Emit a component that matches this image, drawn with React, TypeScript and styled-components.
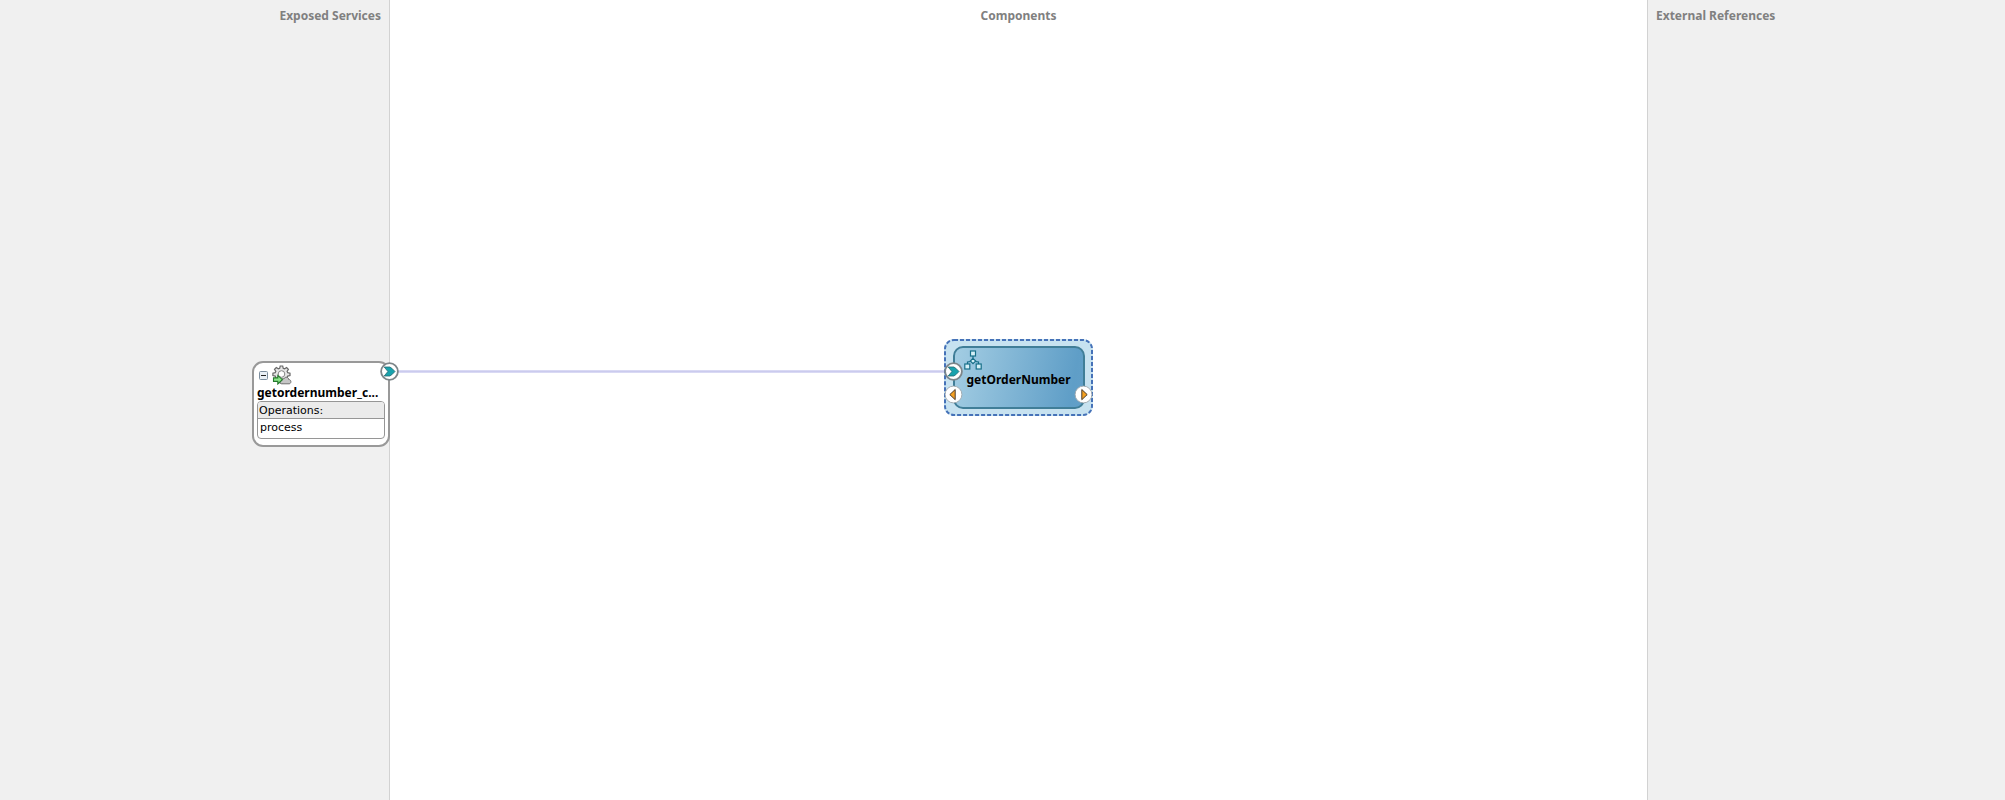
import React from "react";
import styled, { createGlobalStyle } from "styled-components";

const GlobalStyle = createGlobalStyle`
  *, *::before, *::after { box-sizing: border-box; }
  body {
    margin: 0;
    background: #ffffff;
    color: #000000;
    font-family: "Noto Sans", "Open Sans", sans-serif;
  }
`;

const Composite = styled.main`
  display: grid;
  grid-template-columns: 390fr 1257fr 358fr;
  min-height: 100vh;
`;

const Lane = styled.section<{ $side?: "left" | "right" }>`
  position: relative;
  padding: 6px 8px;
  background: ${({ $side }) => ($side ? "#f0f0f0" : "#ffffff")};
  text-align: center;
  ${({ $side }) => $side === "left" && "border-right: 1px solid #d2d2d2; text-align: right; z-index: 1;"}
  ${({ $side }) => $side === "right" && "border-left: 1px solid #d2d2d2; text-align: left;"}
`;

const LaneTitle = styled.h2`
  margin: 0;
  color: #808080;
  font-size: 12px;
  line-height: 19px;
  font-weight: 700;
`;

const Wire = styled.div`
  position: absolute;
  top: 370px;
  left: 0;
  right: 50%;
  height: 3px;
  background: linear-gradient(#e0e0f6, #cbcbee, #e0e0f6);
`;

const ServiceNode = styled.article`
  position: absolute;
  top: 361px;
  right: -1px;
  width: 138px;
  padding: 2px 3px 6px;
  border: 2px solid #999999;
  border-radius: 11px;
  background: #ffffff;
  text-align: left;
`;

const ServiceIcons = styled.div`
  display: flex;
  align-items: center;
  gap: 4px;
  height: 20px;
  padding-left: 2px;
`;

const Toggle = styled.button`
  display: flex;
  padding: 0;
  border: 0;
  background: none;
`;

const ServiceName = styled.h3`
  margin: 0;
  font-size: 12px;
  line-height: 16px;
  font-weight: 700;
  white-space: nowrap;
`;

const Operations = styled.table`
  width: 100%;
  border: 1px solid #969696;
  border-radius: 4px;
  border-spacing: 0;
  overflow: hidden;
  font-family: "DejaVu Sans", sans-serif;
  font-size: 11px;
  line-height: 15px;
`;

const OperationsHead = styled.th`
  padding: 1px 1px 0;
  border-bottom: 1px solid #969696;
  background: #ebebeb;
  font-weight: 400;
  text-align: left;
`;

const Operation = styled.td`
  padding: 1px 2px 3px;
`;

const ComponentNode = styled.article`
  position: absolute;
  top: 339px;
  left: 50%;
  width: 149px;
  height: 77px;
  margin-left: -75px;
  padding: 7px 8px 7px 9px;
  border-radius: 10px;
  background: #c7e2f0;
`;

const SelectionOutline = styled.svg`
  position: absolute;
  inset: 0;
`;

const ComponentBody = styled.div`
  display: flex;
  flex-direction: column;
  height: 100%;
  padding: 2px 9px;
  border: 2px solid #407e98;
  border-radius: 10px;
  background: linear-gradient(100deg, #a3cde3 0%, #5f9ec7 90%, #629fc8 100%);
`;

const ComponentName = styled.h3`
  margin: 0;
  font-size: 12px;
  line-height: 19px;
  font-weight: 700;
  text-align: center;
  white-space: nowrap;
`;

const Port = styled.span<{ $edge: "left" | "right"; $top: number; $out: number }>`
  position: absolute;
  top: ${({ $top }) => $top}px;
  ${({ $edge, $out }) => `${$edge}: ${$out}px;`}
  display: flex;
`;

const PortIcon = ({ kind }: { kind: "service" | "back" | "forward" }) => (
  <svg width="19" height="19" viewBox="0 0 19 19" aria-hidden="true">
    <circle
      cx="9.5"
      cy="9.5"
      r="8.4"
      fill="#fff"
      stroke={kind === "service" ? "#7d8589" : "#9da6ab"}
      strokeWidth={kind === "service" ? 1.8 : 0.9}
    />
    {kind === "service" && (
      <path
        d="M4.2 5h5.600Q11.200 5.300 15 9.500 11.200 13.700 9.800 14H4.200L7.900 9.500z"
        fill="#18a2ad"
        stroke="#246a72"
        strokeWidth="0.8"
      />
    )}
    {kind === "back" && (
      <path d="M11.2 4.5v10.2L5.8 9.6z" fill="#f5a020" stroke="#493c30" strokeWidth="1" />
    )}
    {kind === "forward" && (
      <path d="M7.8 4.5v10.2l5.4-5.1z" fill="#f5a020" stroke="#493c30" strokeWidth="1" />
    )}
  </svg>
);

const CollapseIcon = () => (
  <svg width="9" height="9" viewBox="0 0 9 9" aria-hidden="true">
    <rect x="0.5" y="0.5" width="8" height="8" rx="1" fill="#e9eff5" stroke="#7c8e9f" />
    <path d="M2 4.5h5" stroke="#222" />
  </svg>
);

const GearIcon = () => (
  <svg width="20" height="20" viewBox="0 0 20 20" aria-hidden="true">
    <path
      d="M8.2 1h2.5l.5 2.2 1.4.6 2-1.3 1.8 1.8-1.3 2 .6 1.4 2.3.5v2.4l-2.3.5-.6 1.4 1.2 1.9-1.8 1.8-2-1.3-1.4.6-.5 2.3H8.2l-.5-2.3-1.4-.6-2 1.3-1.8-1.8 1.3-1.9-.6-1.4L.9 10.6V8.2l2.3-.5.6-1.4-1.3-2 1.8-1.8 2 1.3 1.4-.6z"
      fill="#e6e6e6"
      stroke="#686868"
      strokeWidth="1.2"
    />
    <circle cx="9.5" cy="9" r="3.3" fill="#fff" stroke="#858585" />
    <path
      d="M9.5 18.8c-1.8-.2-2.1-2.5-.3-3-.2-1.7 1.5-2.7 2.7-1.9 1-2.5 4.6-2 4.9.6 2.6.1 2.8 3.9.5 4.3z"
      fill="#c6c6c6"
      stroke="#707070"
    />
    <path d="M1.5 12.9h4.3v-2.5l4.6 4.3-4.6 4.3v-2.6H1.5z" fill="#8ce68a" stroke="#26792d" strokeWidth="1.1" />
  </svg>
);

const MediatorIcon = () => (
  <svg width="18" height="20" viewBox="0 0 18 20" aria-hidden="true">
    <g fill="#d5f0f7" stroke="#176f89" strokeWidth="1.2">
      <path d="M9 6v3M6.5 11.5L3.5 12v2M11.5 11.5l3 .5v2" fill="none" />
      <rect x="6.5" y="1" width="5" height="5" />
      <path d="M9 8.3l2.7 2.7L9 13.7 6.3 11z" />
      <rect x="0.8" y="14" width="5" height="5" />
      <rect x="12.2" y="14" width="5" height="5" />
    </g>
  </svg>
);

export default function App() {
  return (
    <>
      <GlobalStyle />
      <Composite>
        <Lane $side="left">
          <LaneTitle>Exposed Services</LaneTitle>
          <ServiceNode>
            <ServiceIcons>
              <Toggle type="button" aria-label="Collapse operations">
                <CollapseIcon />
              </Toggle>
              <GearIcon />
            </ServiceIcons>
            <ServiceName>getordernumber_c...</ServiceName>
            <Operations>
              <thead>
                <tr>
                  <OperationsHead scope="col">Operations:</OperationsHead>
                </tr>
              </thead>
              <tbody>
                <tr>
                  <Operation>process</Operation>
                </tr>
              </tbody>
            </Operations>
            <Port $edge="right" $top={-1} $out={-11}>
              <PortIcon kind="service" />
            </Port>
          </ServiceNode>
        </Lane>
        <Lane>
          <LaneTitle>Components</LaneTitle>
          <Wire />
          <ComponentNode>
            <SelectionOutline width="149" height="77" aria-hidden="true">
              <rect
                x="1"
                y="1"
                width="147"
                height="75"
                rx="9"
                fill="none"
                stroke="#4672b8"
                strokeWidth="2"
                strokeDasharray="4 2"
              />
            </SelectionOutline>
            <ComponentBody>
              <MediatorIcon />
              <ComponentName>getOrderNumber</ComponentName>
            </ComponentBody>
            <Port $edge="left" $top={23} $out={0}>
              <PortIcon kind="service" />
            </Port>
            <Port $edge="left" $top={46} $out={0}>
              <PortIcon kind="back" />
            </Port>
            <Port $edge="right" $top={46} $out={0}>
              <PortIcon kind="forward" />
            </Port>
          </ComponentNode>
        </Lane>
        <Lane $side="right">
          <LaneTitle>External References</LaneTitle>
        </Lane>
      </Composite>
    </>
  );
}
